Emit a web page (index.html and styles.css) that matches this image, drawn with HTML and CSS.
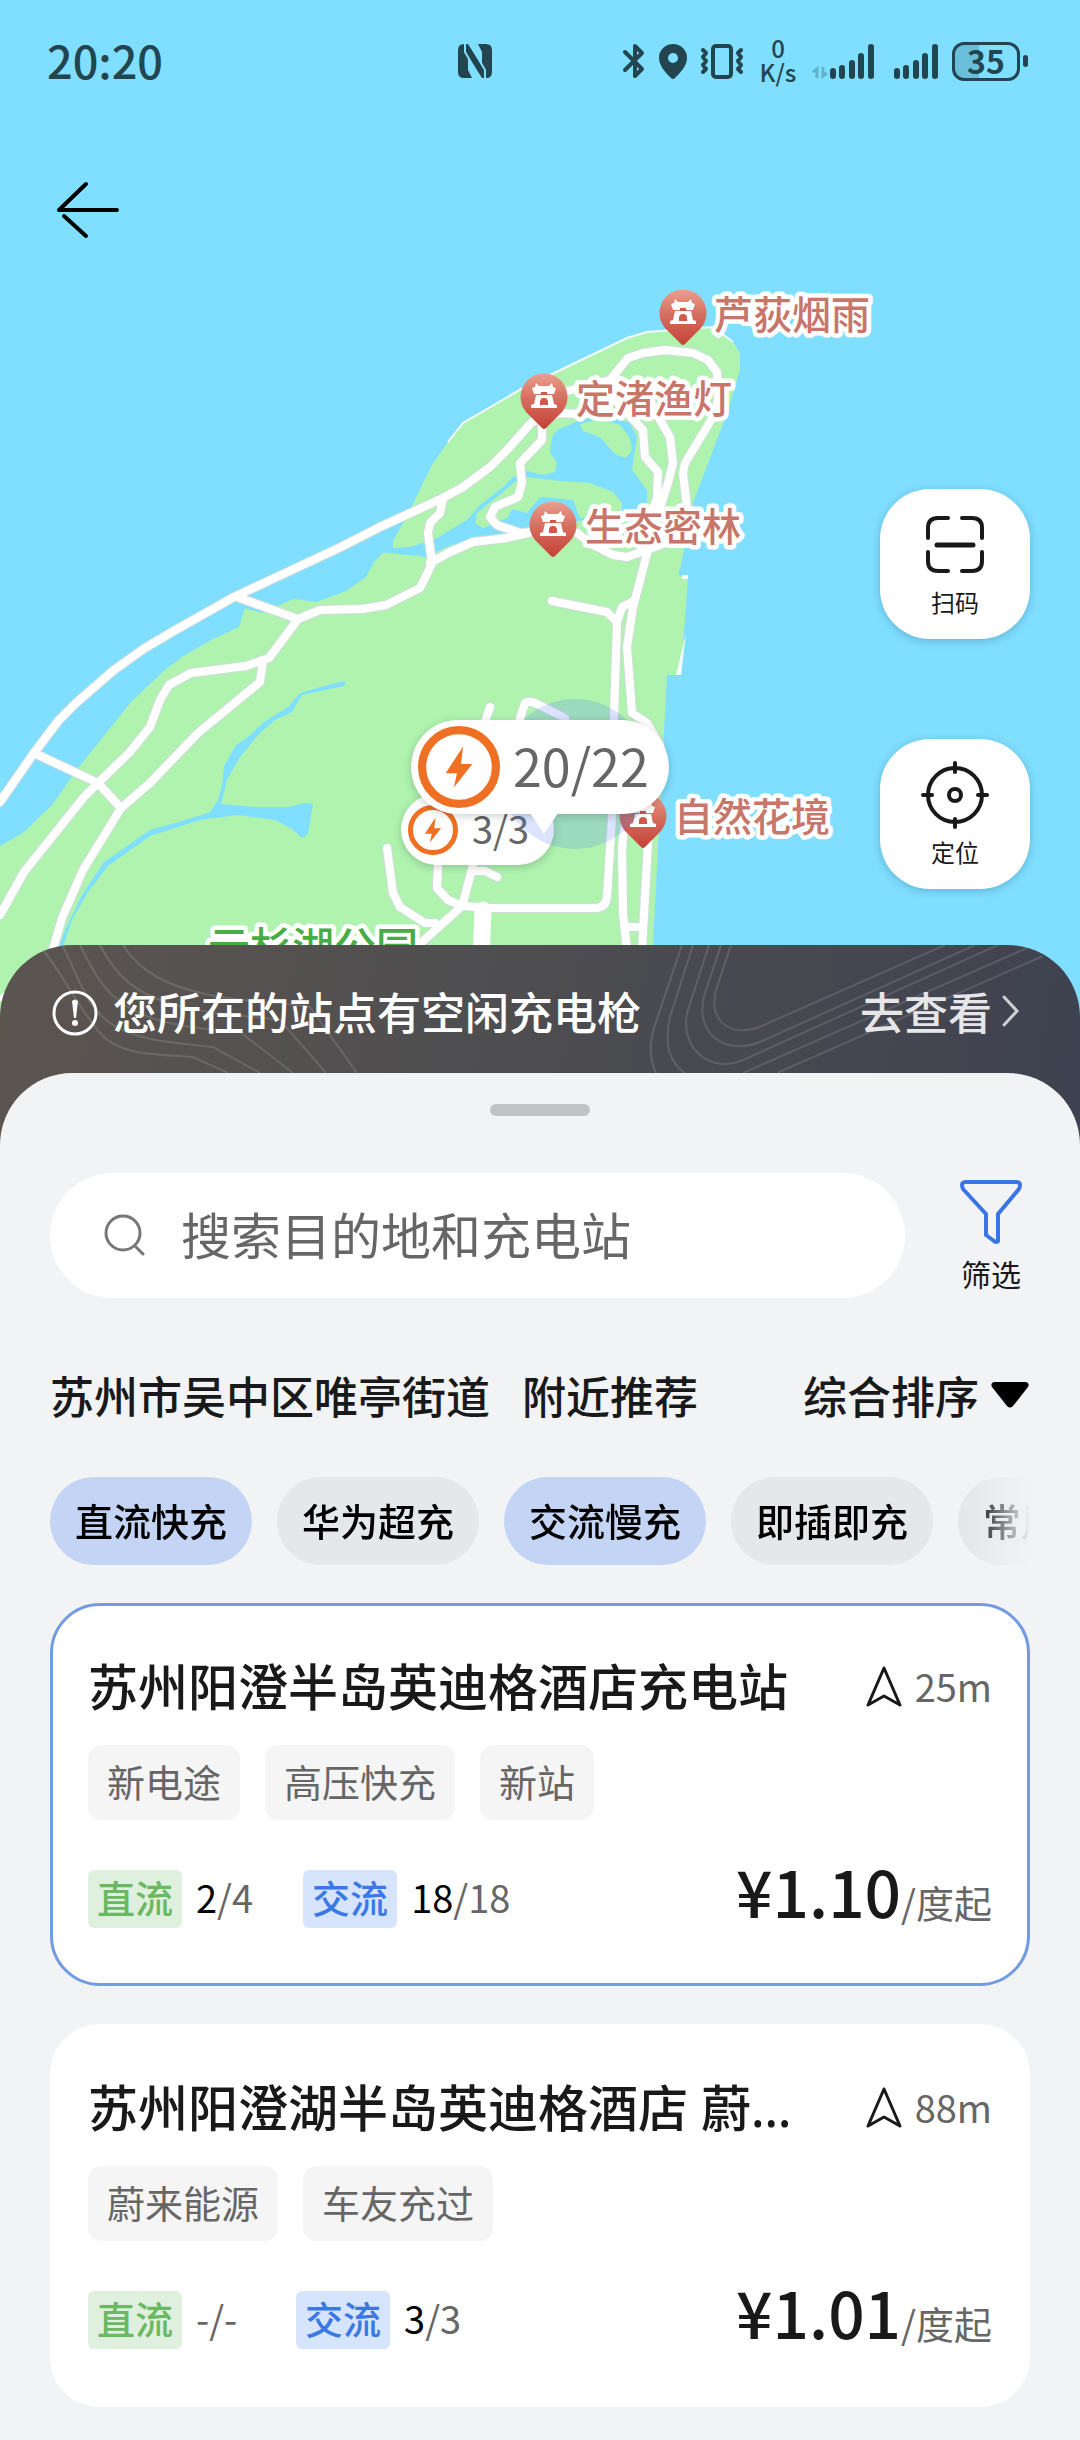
FILE: index.html
```html
<!DOCTYPE html>
<html lang="zh-CN">
<head>
<meta charset="utf-8">
<meta name="viewport" content="width=device-width, initial-scale=1">
<title>充电地图</title>
<link rel="stylesheet" href="styles.css">
</head>
<body>
<svg class="defs" width="0" height="0" aria-hidden="true">
  <defs>
    <linearGradient id="pin-fill" x1="0" y1="0" x2="0" y2="1">
      <stop offset="0" stop-color="#eaa08f"/>
      <stop offset="0.45" stop-color="#d66e60"/>
      <stop offset="1" stop-color="#c44236"/>
    </linearGradient>
    <symbol id="poi" viewBox="-24 -24 48 56" overflow="visible">
      <path d="M-18 15A23.500 23.500 0 1 1 18 15L2 31Q0 33 -2 31Z" fill="url(#pin-fill)"/>
      <path d="M-8-14L-5-11H5L8-14L9-10L12-9L10-3H-10L-12-9L-9-10Z" fill="#fff"/>
      <path d="M-8-2H8L10 7L13 8V11H-13V8L-10 7Z" fill="#fff"/>
      <path d="M-3-5H3V-2H-3ZM-4 8V5A4 4 0 0 1 4 5V8Z" fill="#d0594c"/>
    </symbol>
    <symbol id="bolt" viewBox="0 0 80 80">
      <circle cx="40" cy="40" r="36" fill="none" stroke="#ef7022" stroke-width="8"/>
      <path d="M44 20L27 46H38L35 60L53 37H42Z" fill="#ef7022"/>
    </symbol>
    <symbol id="nav" viewBox="0 0 38 44">
      <path d="M19 3L35 40L19 31L3 40Z" fill="none" stroke="#191919" stroke-width="3" stroke-linejoin="round"/>
    </symbol>
    <symbol id="bars" viewBox="0 0 48 40">
      <path d="M5 30V35M14 27V35M24 22V35M33 15V35M43 6V35" stroke="#23454f" stroke-width="6" stroke-linecap="round"/>
    </symbol>
  </defs>
</svg>

<section class="hero">
  <svg class="map" viewBox="0 0 1080 1020" preserveAspectRatio="xMidYMin slice" role="img" aria-label="地图">
    <rect width="1080" height="1020" fill="#80deff"/>
    <g fill="#aff3af">
      <path d="M0 846L24 832L52 805L79 767L131 702L165 670L182 657L213 639L239 627L245 608L262 613L293 599L317 602L346 591L366 577L374 562L384 552L427 557L450 545L393 548V541L410 510L432 465L448 442L463 423L523 388L627 338L647 332L713 327L733 342L740 353V370L727 413L693 503L680 570L678 575L688 578L681 675H667L663 750L653 945L650 1020H0Z"/>
    </g>
    <path d="M448 442L463 423L523 388L627 338L647 332L713 327L733 342" fill="none" stroke="#f2fbff" stroke-width="2"/>
    <path d="M682 575H688V579H682ZM686 633L681 675H676Z" fill="#f6fbff"/>
    <g fill="#80deff">
      <path d="M380 552L407 548L437 538L467 520L480 505L503 487L513 477L527 471L543 475L555 472L557 463L550 452L552 437L557 430L580 420L597 417L620 419L630 423L637 437L632 470L647 490V507L622 515L600 525L580 520L560 530L528 533L480 538L440 548L427 557Z"/>
      <path d="M346 681L335 683L300 693L288 707L264 722L248 737L236 745L224 766L222 785L218 800L210 812L192 818L150 830L104 862L82 895L65 930L58 950H62L72 920L88 892L108 866L150 836L200 820L237 815L275 820L292 829L302 838L308 834L313 804L305 803L288 807L255 807L221 804L227 780L240 757L260 733L275 720L292 712L302 695L344 686Z"/>
    </g>
    <g fill="#aff3af">
      <path d="M580 424L600 419L620 425L630 438L632 450L626 458L615 454L600 437L583 431Z"/>
      <path d="M517 480L527 477L560 481L590 483L613 492L622 503V515L580 518L573 500L540 497L527 513L512 509L507 518L483 528L475 523L477 513L503 492Z"/>
    </g>
    <g class="road-edge">
      <use href="#roads"/>
    </g>
    <g class="road">
      <g id="roads">
        <path d="M0 802L34 753L59 720L76 703L114 670L145 648L172 632L234 597L341 547L380 527L443 498L463 487L490 467L507 450L532 422L560 413L580 414"/>
        <path d="M560 393L610 380L628 358L643 353L665 350L693 353L708 360L717 372L718 400L713 417L685 463L683 473L687 507L670 541L647 550L627 557L613 555L593 545L577 533"/>
        <path d="M542 427V440L520 463L522 483L518 497L495 507L490 517L497 525L520 533L557 530"/>
        <path d="M545 527L528 533L507 538L473 542L450 552L430 563"/>
        <path d="M443 498L440 513L430 523L428 533L432 563L428 572L420 588L386 605L362 609L320 610L298 619L269 658L246 666L191 673L169 685L160 700L150 727L129 753L98 783L84 797L24 872L0 915"/>
        <path d="M263 660L260 682L198 733L150 783L121 808L83 870L62 918L50 960"/>
        <path d="M237 597L298 619M34 753L98 783L121 808"/>
        <path d="M615 400L643 430L645 457L658 472L657 497L650 520"/>
        <path d="M650 400L660 420L670 437L673 463L668 483L660 508L648 550L633 607L627 647L632 713L647 723L660 745L650 800L648 843L642 950"/>
        <path d="M552 601L607 612L617 622L614 717L612 817L607 897Q606 908 595 908H490L462 906L448 900L437 888L438 865"/>
        <path d="M617 622L622 607L632 602M629 800L623 837L622 850L623 913L627 950M624 927H643"/>
        <path d="M387 848L393 893L400 907L425 923H435M462 906L422 942L408 950M473 865L463 903M473 871H485L497 877"/>
        <path d="M490 707L484 725M518 725L525 703Q530 700 537 704L565 718"/>
      </g>
      <path class="road-wide" d="M483 910L481 960"/>
    </g>
    <path d="M0 1000L60 960" stroke="#fff" stroke-width="8"/>
    <g class="poi-icons">
      <use href="#poi" x="659" y="289" width="48" height="56"/>
      <use href="#poi" x="520" y="373" width="48" height="56"/>
      <use href="#poi" x="529" y="501" width="48" height="56"/>
      <use href="#poi" x="619" y="792" width="48" height="56"/>
    </g>
    <g class="poi-label">
      <text x="714" y="329">芦荻烟雨</text>
      <text x="576" y="413">定渚渔灯</text>
      <text x="585" y="541">生态密林</text>
      <text x="674" y="831">自然花境</text>
      <text class="park-label" x="208" y="963">云杉湖公园</text>
    </g>
  </svg>

  <header class="status">
    <time class="clock">20:20</time>
    <svg class="nfc" width="34" height="34" viewBox="0 0 34 34" aria-hidden="true">
      <path d="M6 0H10L24 22V8L20 0H28Q34 0 34 6V28Q34 34 28 34H24L10 12V26L14 34H6Q0 34 0 28V6Q0 0 6 0Z" fill="#23454f"/>
      <path d="M12 0L27 26V34M7 0V8L22 34" fill="none" stroke="#80deff" stroke-width="2"/>
    </svg>
    <div class="status-icons">
      <svg width="24" height="40" viewBox="0 0 24 40" aria-hidden="true"><path d="M3 11L20 28L13 35V5L20 12L3 29" fill="none" stroke="#23454f" stroke-width="4" stroke-linejoin="round" stroke-linecap="round"/></svg>
      <svg width="30" height="40" viewBox="0 0 30 40" aria-hidden="true"><path d="M15 3A14 14 0 0 1 29 17C29 25 22 32 17 37Q15 39 13 37C8 32 1 25 1 17A14 14 0 0 1 15 3ZM15 12A5 5 0 1 0 15 22A5 5 0 1 0 15 12Z" fill="#23454f"/></svg>
      <svg width="44" height="40" viewBox="0 0 44 40" aria-hidden="true"><rect x="13" y="5" width="18" height="31" rx="3" fill="none" stroke="#23454f" stroke-width="4"/><path d="M3 9L6 12L3 16L6 20L3 24L6 28L3 31M41 9L38 12L41 16L38 20L41 24L38 28L41 31" fill="none" stroke="#23454f" stroke-width="4" stroke-linejoin="round" stroke-linecap="round"/></svg>
      <span class="speed"><span>0</span><span>K/s</span></span>
      <span class="signal">
        <svg width="16" height="40" viewBox="0 0 16 40" aria-hidden="true"><path d="M5 37V28L1 31M11 26V35L15 32" fill="none" stroke="#5fb3c9" stroke-width="3"/></svg>
        <svg width="48" height="40" aria-hidden="true"><use href="#bars"/></svg>
      </span>
      <svg width="48" height="40" aria-hidden="true"><use href="#bars"/></svg>
      <span class="battery"><span>35</span></span>
    </div>
  </header>

  <button class="back" aria-label="返回">
    <svg width="64" height="60" viewBox="0 0 64 60"><path d="M31 4L4 30H62M9 36L31 56" fill="none" stroke="#000" stroke-width="4" stroke-linecap="round" stroke-linejoin="round"/></svg>
  </button>

  <button class="marker marker-small"><svg width="50" height="50"><use href="#bolt"/></svg><span>3/3</span></button>
  <span class="here"></span>
  <button class="marker marker-large"><svg width="82" height="82"><use href="#bolt"/></svg><span>20/22</span></button>

  <nav class="tools">
    <button class="tool">
      <svg width="70" height="70" viewBox="0 0 70 70" fill="none" stroke="#191919" stroke-width="4" stroke-linecap="round"><path d="M8 28V18Q8 8 18 8H28M42 8H52Q62 8 62 18V28M62 42V51Q62 61 52 61H42M28 61H18Q8 61 8 51V42"/><path d="M17 35H53" stroke-width="5"/></svg>
      <span>扫码</span>
    </button>
    <button class="tool">
      <svg width="70" height="70" viewBox="0 0 70 70" fill="none" stroke="#191919" stroke-width="4" stroke-linecap="round"><circle cx="35" cy="35" r="27"/><circle cx="35" cy="35" r="6"/><path d="M35 3V12M35 59V67M3 35H12M58 35H67"/></svg>
      <span>定位</span>
    </button>
  </nav>
</section>

<section class="banner">
  <svg class="contours" viewBox="0 0 1080 128" preserveAspectRatio="xMidYMin slice" aria-hidden="true">
    <path d="M43 5C60 25 80 65 100 88S155 109 193 112T228 128"/>
    <path d="M63 2C78 30 85 60 110 78S175 98 213 102T260 128"/>
    <path d="M80 0C95 30 105 50 133 65S200 84 240 87T293 128"/>
    <path d="M100 0C115 30 135 50 180 61S245 70 280 75T326 128"/>
    <path d="M123 0C140 28 170 42 210 50S270 56 310 62T357 128"/>
    <path d="M682 0L655 80Q646 106 656 128"/>
    <path d="M693 0L670 72Q661 112 685 128"/>
    <path d="M709 0L688 65C678 100 708 130 743 115L998 0"/>
    <path d="M721 0L705 48C693 85 722 112 760 97L975 0"/>
    <path d="M731 0L717 42C707 74 728 92 757 83L945 0"/>
    <path d="M743 128L1027 3M777 128L1043 11"/>
  </svg>
  <svg class="info" width="48" height="48" viewBox="0 0 48 48" aria-hidden="true"><circle cx="24" cy="24" r="21" fill="none" stroke="#fff" stroke-width="3"/><path d="M21 12Q24 9 27 12L25 29H23Z" fill="#fff"/><circle cx="24" cy="34" r="3" fill="#fff"/></svg>
  <p class="banner-text">您所在的站点有空闲充电枪</p>
  <a class="banner-link" href="#stations">去查看
    <svg width="22" height="36" viewBox="0 0 22 36" aria-hidden="true"><path d="M4 4L17 18L4 32" fill="none" stroke="#d0d0d2" stroke-width="3" stroke-linecap="round"/></svg>
  </a>
</section>

<main class="sheet">
  <div class="handle"></div>
  <div class="search-row">
    <label class="search">
      <svg width="42" height="42" viewBox="0 0 42 42" aria-hidden="true"><circle cx="19" cy="19" r="17" fill="none" stroke="#777" stroke-width="3"/><path d="M32 33L39 40" stroke="#777" stroke-width="3" stroke-linecap="round"/></svg>
      <input type="search" placeholder="搜索目的地和充电站" aria-label="搜索目的地和充电站">
    </label>
    <button class="filter">
      <svg width="64" height="66" viewBox="0 0 64 66"><path d="M7 3H57Q63 3 60 10L39 35V62Q38 64 35 62L27 56V35L4 10Q1 3 7 3Z" fill="none" stroke="#3a74e6" stroke-width="4" stroke-linejoin="round"/></svg>
      <span>筛选</span>
    </button>
  </div>

  <div class="place-row">
    <h1>苏州市吴中区唯亭街道</h1>
    <span>附近推荐</span>
    <button class="sort">综合排序
      <svg width="40" height="28" viewBox="0 0 40 28" aria-hidden="true"><path d="M4 1H36Q40 2 38 6L23 25Q20 28 17 25L2 6Q0 2 4 1Z"/></svg>
    </button>
  </div>

  <div class="chips">
    <button class="chip chip-on" aria-pressed="true">直流快充</button>
    <button class="chip">华为超充</button>
    <button class="chip chip-on" aria-pressed="true">交流慢充</button>
    <button class="chip">即插即充</button>
    <button class="chip">常用站点</button>
  </div>

  <div class="stations" id="stations">
    <article class="card card-active">
      <div class="card-head">
        <h2>苏州阳澄半岛英迪格酒店充电站</h2>
        <span class="distance"><svg width="38" height="44" aria-hidden="true"><use href="#nav"/></svg><span>25m</span></span>
      </div>
      <div class="tags"><span>新电途</span><span>高压快充</span><span>新站</span></div>
      <div class="card-foot">
        <span class="kind kind-dc">直流</span><span class="count"><b>2</b>/4</span>
        <span class="kind kind-ac">交流</span><span class="count"><b>18</b>/18</span>
        <span class="price"><strong>¥1.10</strong>/度起</span>
      </div>
    </article>
    <article class="card">
      <div class="card-head">
        <h2>苏州阳澄湖半岛英迪格酒店 蔚来充电站</h2>
        <span class="distance"><svg width="38" height="44" aria-hidden="true"><use href="#nav"/></svg><span>88m</span></span>
      </div>
      <div class="tags"><span>蔚来能源</span><span>车友充过</span></div>
      <div class="card-foot">
        <span class="kind kind-dc">直流</span><span class="count">-/-</span>
        <span class="kind kind-ac">交流</span><span class="count"><b>3</b>/3</span>
        <span class="price"><strong>¥1.01</strong>/度起</span>
      </div>
    </article>
  </div>
</main>
</body>
</html>
```
FILE: styles.css
```css
* {
  box-sizing: border-box;
}

body {
  margin: 0;
  background: #f1f3f5;
  color: #191919;
  font-family: "Noto Sans CJK SC", "Noto Sans", sans-serif;
  font-size: 38px;
}

h1, h2, p {
  margin: 0;
  font-weight: 500;
}

button {
  margin: 0;
  padding: 0;
  border: 0;
  background: none;
  color: inherit;
  font: inherit;
}

svg {
  display: block;
  flex: none;
}

.defs {
  position: absolute;
}

/* Map */

.hero {
  position: relative;
  height: 1020px;
  overflow: hidden;
}

.map {
  position: absolute;
  inset: 0;
  width: 100%;
  height: 100%;
}

.road, .road-edge {
  fill: none;
  stroke-linecap: round;
  stroke-linejoin: round;
}

.road {
  stroke: #fff;
  stroke-width: 8px;
}

.road-edge {
  stroke: #d2dcdc;
  stroke-width: 10px;
}

.road-wide {
  stroke-width: 17px;
}

.poi-label {
  fill: #c8766a;
  stroke: #fff;
  stroke-width: 9px;
  stroke-linejoin: round;
  paint-order: stroke;
  font-size: 39px;
  font-weight: 500;
}

.park-label {
  fill: #47ac43;
  font-size: 42px;
}

.status {
  position: relative;
  display: flex;
  align-items: center;
  padding: 28px 52px 0 47px;
  color: #23454f;
}

.clock {
  width: 411px;
  padding-bottom: 2px;
  font-size: 45px;
  font-weight: 500;
  line-height: 64px;
}

.status-icons {
  display: flex;
  align-items: center;
  gap: 12px;
  margin-left: auto;
}

.speed {
  display: flex;
  flex-direction: column;
  align-items: center;
  width: 44px;
  padding-bottom: 2px;
  font-size: 24px;
  font-weight: 500;
  line-height: 24px;
}

.signal {
  display: flex;
  width: 68px;
}

.battery {
  position: relative;
  width: 76px;
  padding-right: 8px;
}

.battery span {
  display: block;
  padding-bottom: 2px;
  border: 3px solid #23454f;
  border-radius: 12px;
  background: linear-gradient(90deg, #69bfd9 38%, transparent 38%);
  font-size: 32px;
  font-weight: 700;
  line-height: 31px;
  text-align: center;
}

.battery::after {
  content: "";
  position: absolute;
  right: 0;
  top: 13px;
  width: 5px;
  height: 12px;
  border-radius: 3px;
  background: #23454f;
}

.back {
  position: relative;
  display: block;
  margin: 86px 0 0 55px;
}

.marker {
  position: absolute;
  display: flex;
  align-items: center;
  background: #fff;
  color: #666;
  box-shadow: 0 2px 8px rgba(0, 0, 0, .2);
}

.marker span {
  padding-bottom: 4px;
}

.marker-small {
  left: 401px;
  top: 794px;
  width: 153px;
  height: 71px;
  gap: 14px;
  padding-left: 7px;
  border-radius: 36px;
  font-size: 38px;
  line-height: 48px;
}

.marker-large {
  left: 411px;
  top: 720px;
  width: 258px;
  height: 94px;
  gap: 13px;
  padding-left: 7px;
  border-radius: 47px;
  font-size: 52px;
  line-height: 64px;
}

.marker-large::after {
  content: "";
  position: absolute;
  left: 119px;
  top: 93px;
  width: 28px;
  height: 21px;
  background: #fff;
  clip-path: polygon(0 0, 100% 0, 50% 100%);
}

.here {
  position: absolute;
  left: 500px;
  top: 699px;
  width: 150px;
  height: 150px;
  border-radius: 50%;
  background: rgba(75, 120, 240, .2);
}

.tools {
  position: absolute;
  right: 50px;
  top: 489px;
  display: flex;
  flex-direction: column;
  gap: 100px;
}

.tool {
  display: flex;
  flex-direction: column;
  align-items: center;
  width: 150px;
  height: 150px;
  padding-top: 21px;
  gap: 6px;
  border-radius: 50px;
  background: #fff;
  box-shadow: 0 2px 8px rgba(0, 60, 90, .25);
  font-size: 24px;
  line-height: 32px;
}

/* Notice above the sheet */

.banner {
  position: relative;
  display: flex;
  align-items: center;
  margin-top: -75px;
  padding: 36px 58px 100px 51px;
  border-radius: 72px 72px 0 0;
  overflow: hidden;
  background: linear-gradient(100deg, #5b5550, #4d4d50 50%, #3e4250);
  color: #fff;
  font-size: 44px;
  font-weight: 500;
  line-height: 60px;
}

.contours {
  position: absolute;
  left: 0;
  top: 0;
  width: 100%;
  height: 128px;
  fill: none;
  stroke: rgba(255, 255, 255, .13);
  stroke-width: 2px;
}

.banner-text {
  position: relative;
  flex: 1;
  margin-left: 14px;
  padding-bottom: 4px;
}

.banner-link {
  position: relative;
  display: flex;
  align-items: center;
  gap: 8px;
  padding-bottom: 4px;
  color: #e6e6e8;
  text-decoration: none;
}

/* Sheet */

.sheet {
  position: relative;
  margin-top: -72px;
  padding: 31px 50px 33px;
  border-radius: 72px 72px 0 0;
  background: #f1f3f5;
}

.handle {
  width: 100px;
  height: 12px;
  margin: 0 auto 57px;
  border-radius: 6px;
  background: #c1c2c4;
}

.search-row {
  display: flex;
  gap: 47px;
}

.search {
  flex: 1;
  display: flex;
  align-items: center;
  gap: 35px;
  min-width: 0;
  height: 125px;
  padding: 0 50px 2px 54px;
  border-radius: 63px;
  background: #fff;
}

.search input {
  flex: 1;
  min-width: 0;
  padding: 0 0 4px;
  border: 0;
  outline: 0;
  background: none;
  color: #191919;
  font: inherit;
  font-size: 50px;
  line-height: 72px;
}

.search input::placeholder {
  color: #666;
}

.filter {
  display: flex;
  flex-direction: column;
  align-items: center;
  width: 78px;
  padding-top: 6px;
  gap: 10px;
  font-size: 30px;
  line-height: 36px;
}

.place-row {
  display: flex;
  gap: 32px;
  margin-top: 65px;
  font-size: 44px;
  font-weight: 500;
  line-height: 64px;
}

.place-row h1 {
  font-size: 44px;
}

.sort {
  display: flex;
  align-items: center;
  gap: 11px;
  margin-left: auto;
}

.chips {
  display: flex;
  gap: 25px;
  margin-top: 50px;
  overflow: hidden;
  -webkit-mask-image: linear-gradient(90deg, #000 calc(100% - 60px), transparent);
  mask-image: linear-gradient(90deg, #000 calc(100% - 60px), transparent);
}

.chip {
  flex: none;
  height: 88px;
  padding: 0 25px 4px;
  border-radius: 44px;
  background: #e6e7e9;
  color: #000;
  font-weight: 500;
}

.chip-on {
  background: #c4d4f4;
}

.stations {
  display: grid;
  gap: 38px;
  margin-top: 38px;
}

.card {
  min-width: 0;
  padding: 44px 35px 55px;
  border: 3px solid #fff;
  border-radius: 50px;
  background: #fff;
}

.card-active {
  border-color: #739be2;
}

.card-head {
  display: flex;
  align-items: center;
  justify-content: space-between;
  gap: 58px;
}

.card-head h2 {
  min-width: 0;
  overflow: hidden;
  font-family: "Noto Sans", "Noto Sans CJK SC", sans-serif;
  font-size: 50px;
  line-height: 74px;
  text-overflow: ellipsis;
  white-space: nowrap;
}

.distance {
  display: flex;
  flex: none;
  align-items: center;
  gap: 12px;
  color: #666;
}

.distance span {
  padding-bottom: 4px;
}

.tags {
  display: flex;
  gap: 25px;
  margin-top: 21px;
}

.tags span {
  padding: 0 19px 4px;
  border-radius: 13px;
  background: #f5f5f5;
  color: #666;
  line-height: 71px;
}

.card-foot {
  display: flex;
  align-items: flex-start;
  margin-top: 50px;
  line-height: 54px;
}

.kind {
  padding: 0 9px 4px;
  border-radius: 6px;
  font-weight: 500;
}

.kind-dc {
  background: #dff1de;
  color: #6ab862;
}

.kind-ac {
  background: #d7e4fd;
  color: #3a78e6;
}

.count {
  min-width: 50px;
  margin: 0 50px 0 14px;
  color: #666;
}

.count b {
  color: #000;
  font-weight: 400;
}

.price {
  margin-left: auto;
  color: #666;
  line-height: 40px;
}

.price strong {
  color: #191919;
  font-size: 64px;
  font-weight: 500;
}
```
